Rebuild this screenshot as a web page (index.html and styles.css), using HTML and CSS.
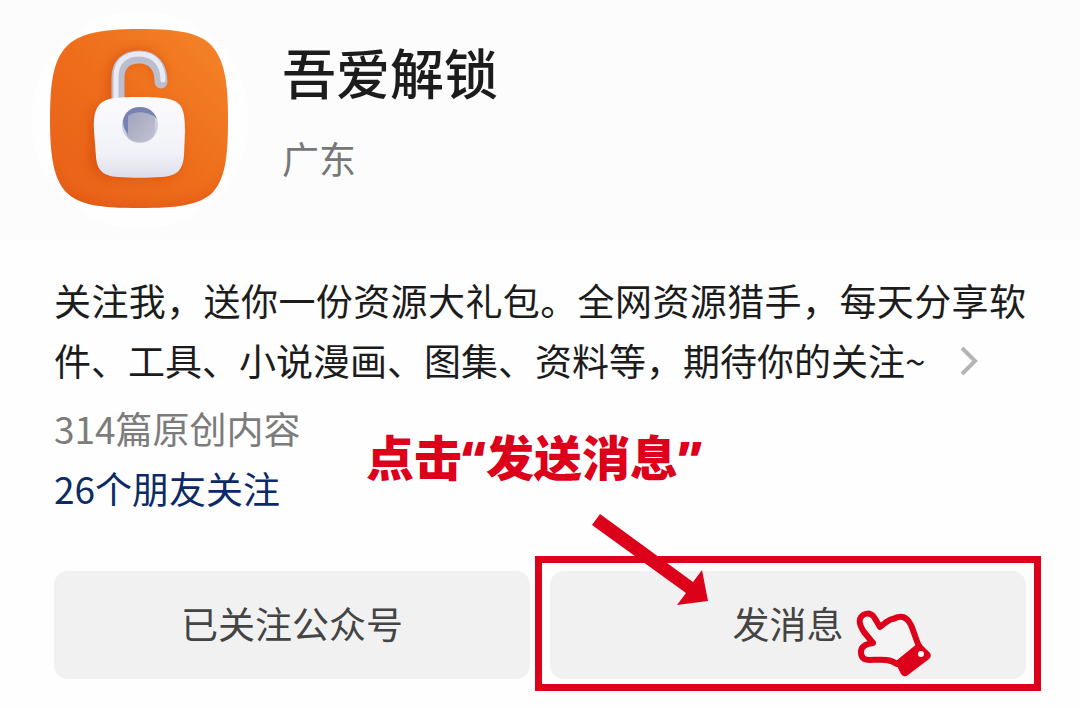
FILE: index.html
```
<!DOCTYPE html>
<html lang="zh-CN">
<head>
<meta charset="UTF-8">
<meta name="viewport" content="width=device-width, initial-scale=1.0">
<title>吾爱解锁</title>
<link rel="stylesheet" href="styles.css">
</head>
<body>
<header class="profile">
    <svg class="avatar" viewBox="0 0 220 220" aria-hidden="true">
        <defs>
            <linearGradient id="orange" x1="0" y1="1" x2="1" y2="0">
                <stop offset="0" stop-color="#e65c18"/>
                <stop offset="0.5" stop-color="#ee6d1b"/>
                <stop offset="1" stop-color="#f58a2c"/>
            </linearGradient>
            <linearGradient id="body" x1="0" y1="0" x2="0" y2="1">
                <stop offset="0" stop-color="#fbfbfd"/>
                <stop offset="0.7" stop-color="#f1f2f8"/>
                <stop offset="1" stop-color="#dcdde8"/>
            </linearGradient>
            <linearGradient id="hole" x1="0" y1="0" x2="1" y2="1">
                <stop offset="0" stop-color="#9ba0bb"/>
                <stop offset="1" stop-color="#c3c4d0"/>
            </linearGradient>
            <filter id="soft" x="-30%" y="-30%" width="160%" height="160%">
                <feGaussianBlur stdDeviation="5"/>
            </filter>
            <clipPath id="tile">
                <path d="M109 19C150 19 169 23 181 35C194 49 198 70 198 109C198 148 195 169 182 183C169 195 148 198 109 198C70 198 49 195 36 182C24 169 20 148 20 109C20 70 24 49 37 36C49 24 70 19 109 19Z"/>
            </clipPath>
        </defs>
        <circle cx="110" cy="110" r="109" fill="#fefefe"/>
        <g clip-path="url(#tile)">
            <rect width="220" height="220" fill="url(#orange)"/>
            <path d="M20 150C26 185 50 194 109 194S190 185 198 150V204H20Z" fill="#d94c12" opacity="0.4" filter="url(#soft)"/>
            <rect x="60" y="93" width="92" height="75" rx="20" fill="#d4480f" opacity="0.6" filter="url(#soft)"/>
            <path d="M84 92V69C84 52 94 45 108 45S130 55 131 70" fill="none" stroke="#cf470e" stroke-width="13" opacity="0.5" filter="url(#soft)"/>
        </g>
        <path d="M88 96V68C88 54 96 47 109 47C123 47 131 56 131 72" fill="none" stroke="#bcbdcd" stroke-width="13" stroke-linecap="round"/>
        <path d="M86 96V67C86 52 95 44 109 44C125 44 133 55 133 70" fill="none" stroke="#e9ebf4" stroke-width="5" stroke-linecap="round"/>
        <path d="M109 87C132 87 143 88 149 94C154 99 155 108 155 122L154 145C153 159 148 166 132 167C118 168 101 168 88 167C73 166 67 160 66 147L64 121C63 108 65 99 70 94C76 88 86 87 109 87Z" fill="url(#body)"/>
        <ellipse cx="110" cy="115" rx="18" ry="18" fill="#cccee2"/>
        <path d="M110 98C120 98 125 103 125 111V120C125 128 119 132 110 132C101 132 96 128 96 120V111C96 103 101 98 110 98Z" fill="url(#hole)"/>
        <path d="M93 111C95 101 102 97 110 97S124 101 127 109C120 101 104 100 98 106V124Q93 119 93 111Z" fill="#7782b2"/>
    </svg>
    <div class="identity">
        <h1>吾爱解锁</h1>
        <p class="region">广东</p>
    </div>
</header>

<main class="content">
    <p class="intro">关注我，送你一份资源大礼包。全网资源猎手，每天分享软件、工具、小说漫画、图集、资料等，期待你的关注~<svg class="chevron" viewBox="0 0 18 30" aria-hidden="true"><path d="M2 2L15 15L2 28"/></svg></p>

    <div class="stats">
        <p class="count">314篇原创内容</p>
        <a class="friends" href="#">26个朋友关注</a>
        <strong class="callout">点击“发送消息”</strong>
    </div>

    <div class="actions">
        <button type="button">已关注公众号</button>
        <div class="highlight">
            <button type="button">发消息</button>
            <svg class="arrow" viewBox="0 0 116 92" aria-hidden="true">
                <path d="M8 0L101 68L110 56L116 87L85 91L94 79L0 11Z"/>
            </svg>
            <svg class="hand" viewBox="0 0 76 68" aria-hidden="true">
                <path class="outline" d="M24 17L18 7C14 2 8 3 5 7C2 11 4 16 8 22L17 33C9 34 5 37 5 42C5 48 8 50 14 50C22 50 33 48 41 54L63 36C60 30 58 22 55 15C52 9 48 6 43 7C40 7 39 9 36 9C33 10 31 12 29 13Z"/>
                <path class="cuff" d="M39 52L64 33L74 43Q76 46 73 49L52 65Q48 68 45 64Z"/>
                <circle cx="65" cy="44" r="3"/>
            </svg>
        </div>
    </div>
</main>
</body>
</html>
```
FILE: styles.css
```
* {
    box-sizing: border-box;
}

body {
    margin: 0;
    background-color: #fefefe;
    color: #1c1c1c;
    font-family: "Noto Sans CJK SC", sans-serif;
    font-size: 37px;
    line-height: 60px;
}

h1, p {
    margin: 0;
}

.profile {
    display: flex;
    gap: 32px;
    padding: 10px 30px;
    background-color: #fcfcfc;
}

.avatar {
    flex: none;
    width: 220px;
    height: 220px;
}

.identity {
    padding-top: 22px;
}

h1 {
    font-size: 54px;
    font-weight: 500;
    line-height: 80px;
}

.region {
    margin-top: 16px;
    color: #777777;
}

.content {
    padding: 30px 54px;
}

.intro {
    text-align: justify;
}

.chevron {
    width: 18px;
    height: 30px;
    margin-left: 34px;
    fill: none;
    stroke: #b4b4b4;
    stroke-width: 4px;
}

.stats {
    position: relative;
    padding-top: 8px;
}

.count {
    color: #7c7c7c;
}

.friends {
    display: inline-block;
    color: #0b2a66;
    text-decoration: none;
}

/* red guide marks lie over the page */
.callout {
    position: absolute;
    top: 38px;
    left: 312px;
    color: #dc001b;
    font-family: "Noto Sans", "Noto Sans CJK SC", sans-serif;
    font-size: 48px;
    font-weight: 900;
    white-space: nowrap;
}

.actions {
    display: grid;
    grid-template-columns: 1fr 1fr;
    gap: 20px;
    margin-top: 53px;
}

button {
    width: 100%;
    height: 108px;
    padding: 0 0 4px;
    border: 0;
    border-radius: 14px;
    background-color: #f1f1f1;
    color: #444444;
    font: inherit;
}

.highlight {
    position: relative;
}

.highlight::after {
    content: "";
    position: absolute;
    inset: -15px -15px -12px;
    border: 7px solid #dc001b;
    pointer-events: none;
}

.arrow {
    position: absolute;
    top: -57px;
    left: 42px;
    width: 116px;
    fill: #dc001b;
}

.hand {
    position: absolute;
    top: 39px;
    right: 94px;
    width: 76px;
    fill: #ffffff;
}

.outline {
    fill: #f4f4f4;
    stroke: #dc001b;
    stroke-width: 6px;
    stroke-linejoin: round;
}

.cuff {
    fill: #dc001b;
}
```
